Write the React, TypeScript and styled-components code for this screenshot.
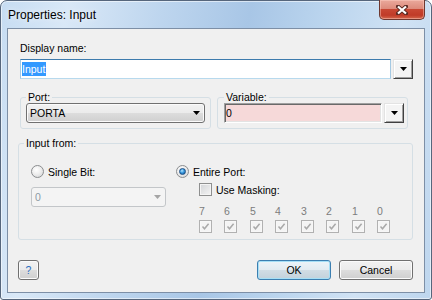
import styled, { createGlobalStyle } from "styled-components";

const GlobalStyle = createGlobalStyle`
  html, body { margin: 0; padding: 0; background: #fff; }
  body {
    font-family: "Liberation Sans", Arial, sans-serif;
    font-size: 10.5px;
    color: #000;
  }
  * { box-sizing: border-box; }
`;

const Window = styled.div`
  width: 432px;
  height: 300px;
  display: flex;
  flex-direction: column;
  border: 1px solid #56667c;
  border-radius: 7px 7px 3px 3px;
  padding: 0 6px 6px 6px;
  background: linear-gradient(
    100deg,
    #c6dcf2 0%,
    #d9e8f7 14%,
    #bdd5ee 34%,
    #a8c6e6 52%,
    #bbd5ee 68%,
    #d0e2f4 84%,
    #bed6ee 100%
  );
  box-shadow: inset 0 0 0 1px rgba(255, 255, 255, 0.55);
`;

const TitleBar = styled.div`
  height: 27px;
  display: flex;
  align-items: center;
  justify-content: space-between;
  padding-left: 1px;
`;

const Title = styled.span`
  font-size: 12px;
  color: #000;
  text-shadow: 0 0 6px rgba(255, 255, 255, 0.9);
`;

const CloseButton = styled.div`
  align-self: flex-start;
  margin-top: -1px;
  width: 46px;
  height: 20px;
  display: flex;
  align-items: center;
  justify-content: center;
  border: 1px solid #6e3830;
  border-top: none;
  border-radius: 0 0 5px 5px;
  background: linear-gradient(
    #eaa99c 0%,
    #dd8b7c 45%,
    #c84733 50%,
    #c03b28 80%,
    #d4684c 100%
  );
  box-shadow: inset 0 0 0 1px rgba(255, 210, 200, 0.45);
`;

const Client = styled.div`
  flex: 1;
  display: flex;
  flex-direction: column;
  background: #f0f0f0;
  border: 1px solid #7d8fa6;
  padding: 13px 11px 0 10px;
`;

const FieldLabel = styled.div`
  padding-left: 2px;
  line-height: 13px;
  margin-bottom: 4px;
`;

const InputRow = styled.div`
  display: flex;
  gap: 2px;
  padding-left: 2px;
  height: 20px;
`;

const TextBox = styled.div`
  flex: 1;
  display: flex;
  align-items: center;
  padding-left: 1px;
  background: #fff;
  border: 1px solid #a4c9e3;
  border-top-color: #3d7bad;
  border-bottom-color: #b7d9ed;
`;

const Selected = styled.span`
  background: #3399ff;
  color: #fff;
  line-height: 14px;
  padding-right: 1px;
`;

const DropButton = styled.div`
  width: 20px;
  height: 20px;
  flex: none;
  display: flex;
  align-items: center;
  justify-content: center;
  background: #f4f4f4;
  border: 1px solid;
  border-color: #e3e3e3 #404040 #404040 #e3e3e3;
  box-shadow: inset 1px 1px 0 #fff, inset -1px -1px 0 #a0a0a0;
`;

const GroupRow = styled.div`
  display: flex;
  gap: 6px;
  padding-left: 2px;
  margin-top: 12px;
`;

const Group = styled.fieldset<{ $w?: number; $pl: number; $pr: number; $pb: number; $mt?: number }>`
  margin: ${(p) => p.$mt ?? 0}px 0 0 0;
  min-width: 0;
  width: ${(p) => (p.$w ? `${p.$w}px` : "100%")};
  border: 1px solid #d5dfe5;
  border-radius: 3px;
  padding: 0 ${(p) => p.$pr}px ${(p) => p.$pb}px ${(p) => p.$pl}px;
`;

const Legend = styled.legend`
  padding: 0 2px;
  line-height: 12px;
`;

const Combo = styled.div<{ $disabled?: boolean; $w?: number }>`
  height: 20px;
  width: ${(p) => (p.$w ? `${p.$w}px` : "100%")};
  margin-top: ${(p) => (p.$disabled ? 9 : 0)}px;
  display: flex;
  align-items: center;
  justify-content: space-between;
  padding: 0 4px 0 3px;
  border-radius: 3px;
  color: ${(p) => (p.$disabled ? "#8d9aa5" : "#000")};
  border: 1px solid ${(p) => (p.$disabled ? "#c3c6c9" : "#707070")};
  background: ${(p) =>
    p.$disabled
      ? "#f4f4f4"
      : "linear-gradient(#f2f2f2 0%, #ebebeb 50%, #dddddd 50%, #cfcfcf 100%)"};
  box-shadow: ${(p) => (p.$disabled ? "none" : "inset 0 0 0 1px #fbfbfb")};
`;

const VariableRow = styled.div`
  display: flex;
  gap: 2px;
  height: 20px;
`;

const VariableField = styled.div`
  flex: 1;
  display: flex;
  align-items: center;
  padding-left: 1px;
  background: #f6d9d9;
  border: 1px solid;
  border-color: #a0a0a0 #fff #fff #a0a0a0;
  box-shadow: inset 1px 1px 0 #696969, inset -1px -1px 0 #e3e3e3;
`;

const InputGrid = styled.div`
  display: grid;
  grid-template-columns: 145px 1fr;
  padding: 16px 0 0 7px;
`;

const Column = styled.div`
  display: flex;
  flex-direction: column;
`;

const OptionRow = styled.label<{ $indent?: number; $mt?: number }>`
  display: flex;
  align-items: center;
  gap: 4px;
  height: 13px;
  margin-left: ${(p) => p.$indent ?? 0}px;
  margin-top: ${(p) => p.$mt ?? 0}px;
`;

const RadioCircle = styled.span`
  width: 13px;
  height: 13px;
  flex: none;
  border-radius: 50%;
  border: 1px solid #8b8d8f;
  background: radial-gradient(circle at 40% 35%, #ffffff 0%, #eeeeee 45%, #cfd1d3 100%);
  display: flex;
  align-items: center;
  justify-content: center;
`;

const RadioDot = styled.span`
  width: 7px;
  height: 7px;
  border-radius: 50%;
  border: 1px solid #1b4f86;
  background: radial-gradient(circle at 40% 35%, #b6e6ff 0%, #3a9be0 45%, #0e4d90 100%);
`;

const CheckBoxBox = styled.span<{ $disabled?: boolean }>`
  width: 13px;
  height: 13px;
  flex: none;
  display: flex;
  align-items: center;
  justify-content: center;
  border: 1px solid ${(p) => (p.$disabled ? "#b1b1b1" : "#8e8f8f")};
  background: ${(p) =>
    p.$disabled ? "#f4f4f4" : "linear-gradient(135deg, #d2d4d7 0%, #f4f4f4 100%)"};
  box-shadow: inset 0 0 0 1px ${(p) => (p.$disabled ? "#f7f7f7" : "#f4f4f4")};
`;

const BitsGrid = styled.div`
  display: grid;
  grid-template-columns: 25px 26px 25px 26px 25px 26px 25px 13px;
  row-gap: 3px;
  margin-left: 23px;
  margin-top: 9px;
`;

const Digit = styled.span`
  line-height: 12px;
  color: #7c7c7c;
`;

const Footer = styled.div`
  display: flex;
  align-items: center;
  gap: 8px;
  margin-top: 20px;
`;

const Spacer = styled.div`
  flex: 1;
`;

const Button = styled.button<{ $w: number; $primary?: boolean }>`
  width: ${(p) => p.$w}px;
  height: 20px;
  padding: 0;
  font: inherit;
  color: #000;
  border-radius: 3px;
  border: 1px solid ${(p) => (p.$primary ? "#3c7fb1" : "#707070")};
  background: ${(p) =>
    p.$primary
      ? "linear-gradient(#ecf4f9 0%, #e2ebf1 50%, #d1dde5 50%, #c3d1db 100%)"
      : "linear-gradient(#f2f2f2 0%, #ebebeb 50%, #dddddd 50%, #cfcfcf 100%)"};
  box-shadow: inset 0 0 0 1px ${(p) => (p.$primary ? "#a6dff6" : "#fbfbfb")};
`;

const HelpMark = styled.span`
  color: #2a6dc0;
`;

function Arrow({ color = "#000" }: { color?: string }) {
  return (
    <svg width="7" height="4" viewBox="0 0 7 4">
      <polygon points="0,0 7,0 3.5,4" fill={color} />
    </svg>
  );
}

function Radio({ checked }: { checked?: boolean }) {
  return <RadioCircle>{checked && <RadioDot />}</RadioCircle>;
}

function CheckBox({ checked, disabled }: { checked?: boolean; disabled?: boolean }) {
  return (
    <CheckBoxBox $disabled={disabled}>
      {checked && (
        <svg width="9" height="9" viewBox="0 0 9 9">
          <path d="M1.5 4.5 L3.5 6.8 L7.6 1.8" fill="none" stroke="#a9a9a9" strokeWidth="1.5" />
        </svg>
      )}
    </CheckBoxBox>
  );
}

const bits = [7, 6, 5, 4, 3, 2, 1, 0];

export default function App() {
  return (
    <>
      <GlobalStyle />
      <Window>
        <TitleBar>
          <Title>Properties: Input</Title>
          <CloseButton>
            <svg width="12" height="10" viewBox="0 0 12 10">
              <path d="M2 1.5 L10 8.5 M10 1.5 L2 8.5" stroke="#5a2a22" strokeWidth="4" strokeLinecap="square" />
              <path d="M2 1.5 L10 8.5 M10 1.5 L2 8.5" stroke="#fff" strokeWidth="2.2" />
            </svg>
          </CloseButton>
        </TitleBar>
        <Client>
          <FieldLabel>Display name:</FieldLabel>
          <InputRow>
            <TextBox>
              <Selected>Input</Selected>
            </TextBox>
            <DropButton>
              <Arrow />
            </DropButton>
          </InputRow>

          <GroupRow>
            <Group $w={191} $pl={5} $pr={5} $pb={5}>
              <Legend>Port:</Legend>
              <Combo>
                <span>PORTA</span>
                <Arrow />
              </Combo>
            </Group>
            <Group $w={191} $pl={6} $pr={3} $pb={5}>
              <Legend>Variable:</Legend>
              <VariableRow>
                <VariableField>0</VariableField>
                <DropButton>
                  <Arrow />
                </DropButton>
              </VariableRow>
            </Group>
          </GroupRow>

          <Group $pl={5} $pr={0} $pb={6} $mt={8}>
            <Legend>Input from:</Legend>
            <InputGrid>
              <Column>
                <OptionRow>
                  <Radio />
                  <span>Single Bit:</span>
                </OptionRow>
                <Combo $disabled $w={135}>
                  <span>0</span>
                  <Arrow color="#a5a5a5" />
                </Combo>
              </Column>
              <Column>
                <OptionRow>
                  <Radio checked />
                  <span>Entire Port:</span>
                </OptionRow>
                <OptionRow $indent={23} $mt={5}>
                  <CheckBox />
                  <span>Use Masking:</span>
                </OptionRow>
                <BitsGrid>
                  {bits.map((b) => (
                    <Digit key={`d${b}`}>{b}</Digit>
                  ))}
                  {bits.map((b) => (
                    <CheckBox key={`c${b}`} checked disabled />
                  ))}
                </BitsGrid>
              </Column>
            </InputGrid>
          </Group>

          <Footer>
            <Button $w={21}>
              <HelpMark>?</HelpMark>
            </Button>
            <Spacer />
            <Button $w={74} $primary>
              OK
            </Button>
            <Button $w={74}>Cancel</Button>
          </Footer>
        </Client>
      </Window>
    </>
  );
}
